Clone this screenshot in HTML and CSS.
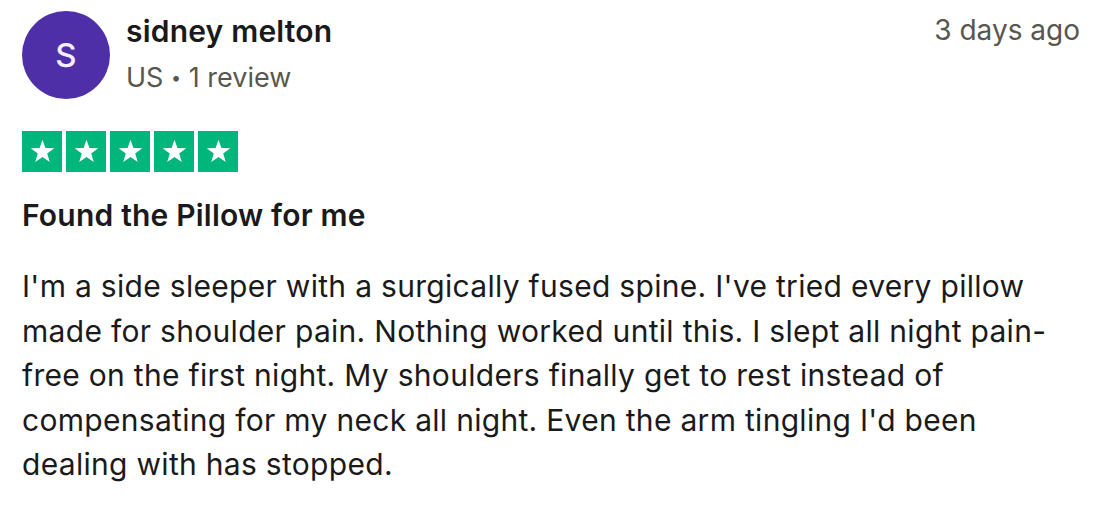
FILE: index.html
```html
<!DOCTYPE html>
<html lang="en">
<head>
    <meta charset="UTF-8">
    <title>Review - sidney melton</title>
    <link rel="stylesheet" href="styles.css">
</head>
<body>
<div class="review">
    <div class="head">
        <div class="avatar">S</div>
        <div class="who">
            <div class="name">sidney melton</div>
            <div class="meta">US <span class="dot">•</span> 1 review</div>
        </div>
        <div class="date">3 days ago</div>
    </div>
    <div class="stars">
        <span class="star"><svg viewBox="0 0 24 24"><polygon points="12,1.5 14.59,8.94 22.46,9.1 16.18,13.86 18.47,21.4 12,16.9 5.53,21.4 7.82,13.86 1.54,9.1 9.41,8.94"/></svg></span>
        <span class="star"><svg viewBox="0 0 24 24"><polygon points="12,1.5 14.59,8.94 22.46,9.1 16.18,13.86 18.47,21.4 12,16.9 5.53,21.4 7.82,13.86 1.54,9.1 9.41,8.94"/></svg></span>
        <span class="star"><svg viewBox="0 0 24 24"><polygon points="12,1.5 14.59,8.94 22.46,9.1 16.18,13.86 18.47,21.4 12,16.9 5.53,21.4 7.82,13.86 1.54,9.1 9.41,8.94"/></svg></span>
        <span class="star"><svg viewBox="0 0 24 24"><polygon points="12,1.5 14.59,8.94 22.46,9.1 16.18,13.86 18.47,21.4 12,16.9 5.53,21.4 7.82,13.86 1.54,9.1 9.41,8.94"/></svg></span>
        <span class="star"><svg viewBox="0 0 24 24"><polygon points="12,1.5 14.59,8.94 22.46,9.1 16.18,13.86 18.47,21.4 12,16.9 5.53,21.4 7.82,13.86 1.54,9.1 9.41,8.94"/></svg></span>
    </div>
    <h2 class="title">Found the Pillow for me</h2>
    <p class="text">I'm a side sleeper with a surgically fused spine. I've tried every pillow made for shoulder pain. Nothing worked until this. I slept all night pain-free on the first night. My shoulders finally get to rest instead of compensating for my neck all night. Even the arm tingling I'd been dealing with has stopped.</p>
</div>
</body>
</html>
```

FILE: styles.css
```css
*{
    margin:0;
    padding:0;
}
body{
    background: #ffffff;
    font-family: Inter, "Liberation Sans", Arial, sans-serif;
    color: #1a1a1a;
}
.review{
    padding: 11px 16px 0 22px;
}
.head{
    display: flex;
    align-items: flex-start;
}
.avatar{
    width: 88px;
    height: 88px;
    border-radius: 50%;
    background: #4f2fa8;
    color: #f4f0ff;
    font-size: 33px;
    font-weight: 500;
    display: flex;
    align-items: center;
    justify-content: center;
    flex-shrink: 0;
}
.who{
    margin-left: 16px;
    padding-top: 2px;
    flex: 1;
}
.name{
    font-size: 30px;
    font-weight: 600;
    letter-spacing: 0.2px;
    line-height: 36px;
}
.meta{
    font-size: 27px;
    color: #57574f;
    line-height: 36px;
    margin-top: 11px;
}
.dot{
    font-size: 18px;
    vertical-align: 3px;
}
.date{
    font-size: 28px;
    color: #57574f;
    line-height: 36px;
    margin-top: 1px;
}
.stars{
    display: flex;
    gap: 4px;
    margin-top: 32px;
}
.star{
    width: 40px;
    height: 41px;
    background: #00b67a;
    display: flex;
    align-items: center;
    justify-content: center;
}
.star svg{
    width: 27px;
    height: 27px;
    fill: #fff;
}
.title{
    font-size: 30px;
    font-weight: 600;
    letter-spacing: 0.2px;
    line-height: 36px;
    margin-top: 25px;
}
.text{
    font-size: 30px;
    letter-spacing: 0.3px;
    line-height: 44.6px;
    margin-top: 31px;
}
```
